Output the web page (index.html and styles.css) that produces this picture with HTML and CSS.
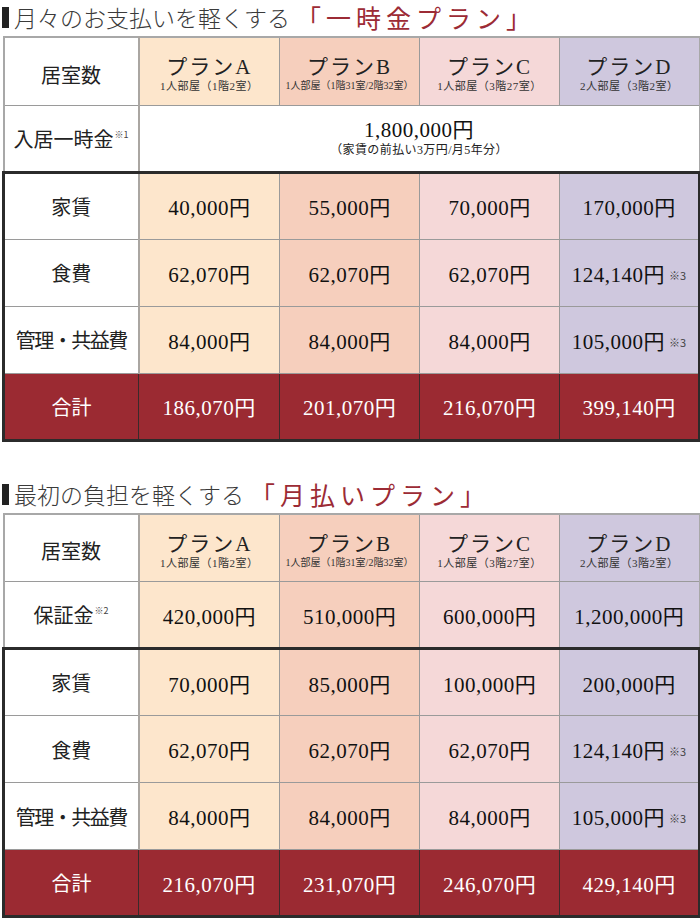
FILE: index.html
```html
<!DOCTYPE html>
<html lang="ja">
<head>
<meta charset="utf-8">
<title>料金プラン</title>
<link rel="stylesheet" href="styles.css">
</head>
<body>
<main class="page">
  <section class="plan">
    <h2 class="heading"><span class="bar"></span><span class="lead">月々のお支払いを軽くする</span><span class="accent">「一時金プラン」</span></h2>
    <table class="price">
      <colgroup><col class="c0"><col class="c1"><col class="c2"><col class="c3"><col class="c4"></colgroup>
      <thead>
        <tr class="head">
          <th class="label">居室数</th>
          <th class="pa"><span class="pname">プランA</span><span class="room">1人部屋（1階2室）</span></th>
          <th class="pb"><span class="pname">プランB</span><span class="room small">1人部屋（1階31室/2階32室）</span></th>
          <th class="pc"><span class="pname">プランC</span><span class="room">1人部屋（3階27室）</span></th>
          <th class="pd"><span class="pname">プランD</span><span class="room">2人部屋（3階2室）</span></th>
        </tr>
        <tr class="fee">
          <th class="label">入居一時金<sup class="note">※1</sup></th>
          <td class="whole" colspan="4"><span class="num">1,800,000円</span><span class="detail">（家賃の前払い3万円/月5年分）</span></td>
        </tr>
      </thead>
      <tbody class="body">
        <tr>
          <th class="label">家賃</th>
          <td class="pa num">40,000円</td><td class="pb num">55,000円</td><td class="pc num">70,000円</td><td class="pd num">170,000円</td>
        </tr>
        <tr>
          <th class="label">食費</th>
          <td class="pa num">62,070円</td><td class="pb num">62,070円</td><td class="pc num">62,070円</td><td class="pd num">124,140円<span class="mark">※3</span></td>
        </tr>
        <tr>
          <th class="label tight">管理・共益費</th>
          <td class="pa num">84,000円</td><td class="pb num">84,000円</td><td class="pc num">84,000円</td><td class="pd num">105,000円<span class="mark">※3</span></td>
        </tr>
        <tr class="total">
          <th class="label">合計</th>
          <td class="num">186,070円</td><td class="num">201,070円</td><td class="num">216,070円</td><td class="num">399,140円</td>
        </tr>
      </tbody>
    </table>
  </section>

  <section class="plan second">
    <h2 class="heading"><span class="bar"></span><span class="lead">最初の負担を軽くする</span><span class="accent">「月払いプラン」</span></h2>
    <table class="price">
      <colgroup><col class="c0"><col class="c1"><col class="c2"><col class="c3"><col class="c4"></colgroup>
      <thead>
        <tr class="head">
          <th class="label">居室数</th>
          <th class="pa"><span class="pname">プランA</span><span class="room">1人部屋（1階2室）</span></th>
          <th class="pb"><span class="pname">プランB</span><span class="room small">1人部屋（1階31室/2階32室）</span></th>
          <th class="pc"><span class="pname">プランC</span><span class="room">1人部屋（3階27室）</span></th>
          <th class="pd"><span class="pname">プランD</span><span class="room">2人部屋（3階2室）</span></th>
        </tr>
        <tr class="fee">
          <th class="label">保証金<sup class="note">※2</sup></th>
          <td class="pa num">420,000円</td><td class="pb num">510,000円</td><td class="pc num">600,000円</td><td class="pd num">1,200,000円</td>
        </tr>
      </thead>
      <tbody class="body">
        <tr>
          <th class="label">家賃</th>
          <td class="pa num">70,000円</td><td class="pb num">85,000円</td><td class="pc num">100,000円</td><td class="pd num">200,000円</td>
        </tr>
        <tr>
          <th class="label">食費</th>
          <td class="pa num">62,070円</td><td class="pb num">62,070円</td><td class="pc num">62,070円</td><td class="pd num">124,140円<span class="mark">※3</span></td>
        </tr>
        <tr>
          <th class="label tight">管理・共益費</th>
          <td class="pa num">84,000円</td><td class="pb num">84,000円</td><td class="pc num">84,000円</td><td class="pd num">105,000円<span class="mark">※3</span></td>
        </tr>
        <tr class="total">
          <th class="label">合計</th>
          <td class="num">216,070円</td><td class="num">231,070円</td><td class="num">246,070円</td><td class="num">429,140円</td>
        </tr>
      </tbody>
    </table>
  </section>
</main>
</body>
</html>
```
FILE: styles.css
```css
* { box-sizing: border-box; }
body {
  margin: 0;
  background: #fff;
  font-family: "Noto Sans CJK JP", sans-serif;
  color: #222;
}
.page { width: 700px; padding: 2px 0 0 2px; }
.plan.second { margin-top: 37px; }

.heading {
  display: flex;
  align-items: center;
  height: 31px;
  margin: 0 0 3px;
  font-weight: 300;
  white-space: nowrap;
}
.heading > span { flex: none; }
.bar { width: 7px; height: 21px; background: #222; margin-right: 5px; }
.lead { font-size: 23px; color: #3a3a3a; line-height: 31px; }
.accent { font-size: 25px; letter-spacing: 5px; color: #9c2b35; margin-left: 6px; line-height: 31px; font-weight: 400; }

.price {
  width: 697px;
  table-layout: fixed;
  border-collapse: collapse;
  border: 2px solid #a8a8a8;
}
.c0 { width: 135px; }
.c1 { width: 141px; }
.c2, .c3, .c4 { width: 140px; }

.price th, .price td {
  border: 1px solid #9a9a9a;
  padding: 0;
  text-align: center;
  vertical-align: middle;
  font-weight: 400;
}
.price .label {
  font-size: 20px;
  color: #222;
  background: #fff;
  border-right: 2px solid #aaa6a2;
}
.label.tight { letter-spacing: -1.5px; }
.note { font-size: 9px; vertical-align: 9px; line-height: 0; color: #444; margin-left: 1px; }

.pa { background: #fde6cc; }
.pb { background: #f6cfbd; }
.pc { background: #f5d8d8; }
.pd { background: #cfc8de; }

.head th { height: 68px; padding-top: 6px; }
.pname {
  display: block;
  font-family: "Liberation Serif", "Noto Sans CJK JP", serif;
  font-size: 21px;
  line-height: 24px;
  letter-spacing: 2px;
  color: #222;
}
.room {
  display: block;
  font-family: "Liberation Serif", "Noto Sans CJK JP", serif;
  font-size: 11px;
  line-height: 14px;
  letter-spacing: 0.5px;
  color: #333;
}
.room.small { font-size: 10px; letter-spacing: 0; }

.fee th, .fee td { height: 67px; }
.num {
  font-family: "Liberation Serif", "Noto Sans CJK JP", serif;
  font-size: 21px;
  letter-spacing: 0.5px;
  color: #111;
}
.whole { background: #fff; }
.whole .num { display: block; line-height: 24px; }
.detail {
  display: block;
  font-family: "Liberation Serif", "Noto Sans CJK JP", serif;
  font-size: 12px;
  line-height: 16px;
  letter-spacing: 0.4px;
  color: #222;
}
.mark {
  font-family: "Noto Sans CJK JP", sans-serif;
  font-size: 11px;
  letter-spacing: 0;
  color: #444;
  margin-left: 4px;
  vertical-align: 2px;
}

.body { border: 3px solid #2b2b2b; }
.body th, .body td { height: 67px; }
.total th, .total td {
  background: #9b2a32;
  color: #fff;
  border-color: #3a2a2a;
}
.price .total .label { background: #9b2a32; color: #fff; border-right: 1px solid #3a2a2a; }
```
